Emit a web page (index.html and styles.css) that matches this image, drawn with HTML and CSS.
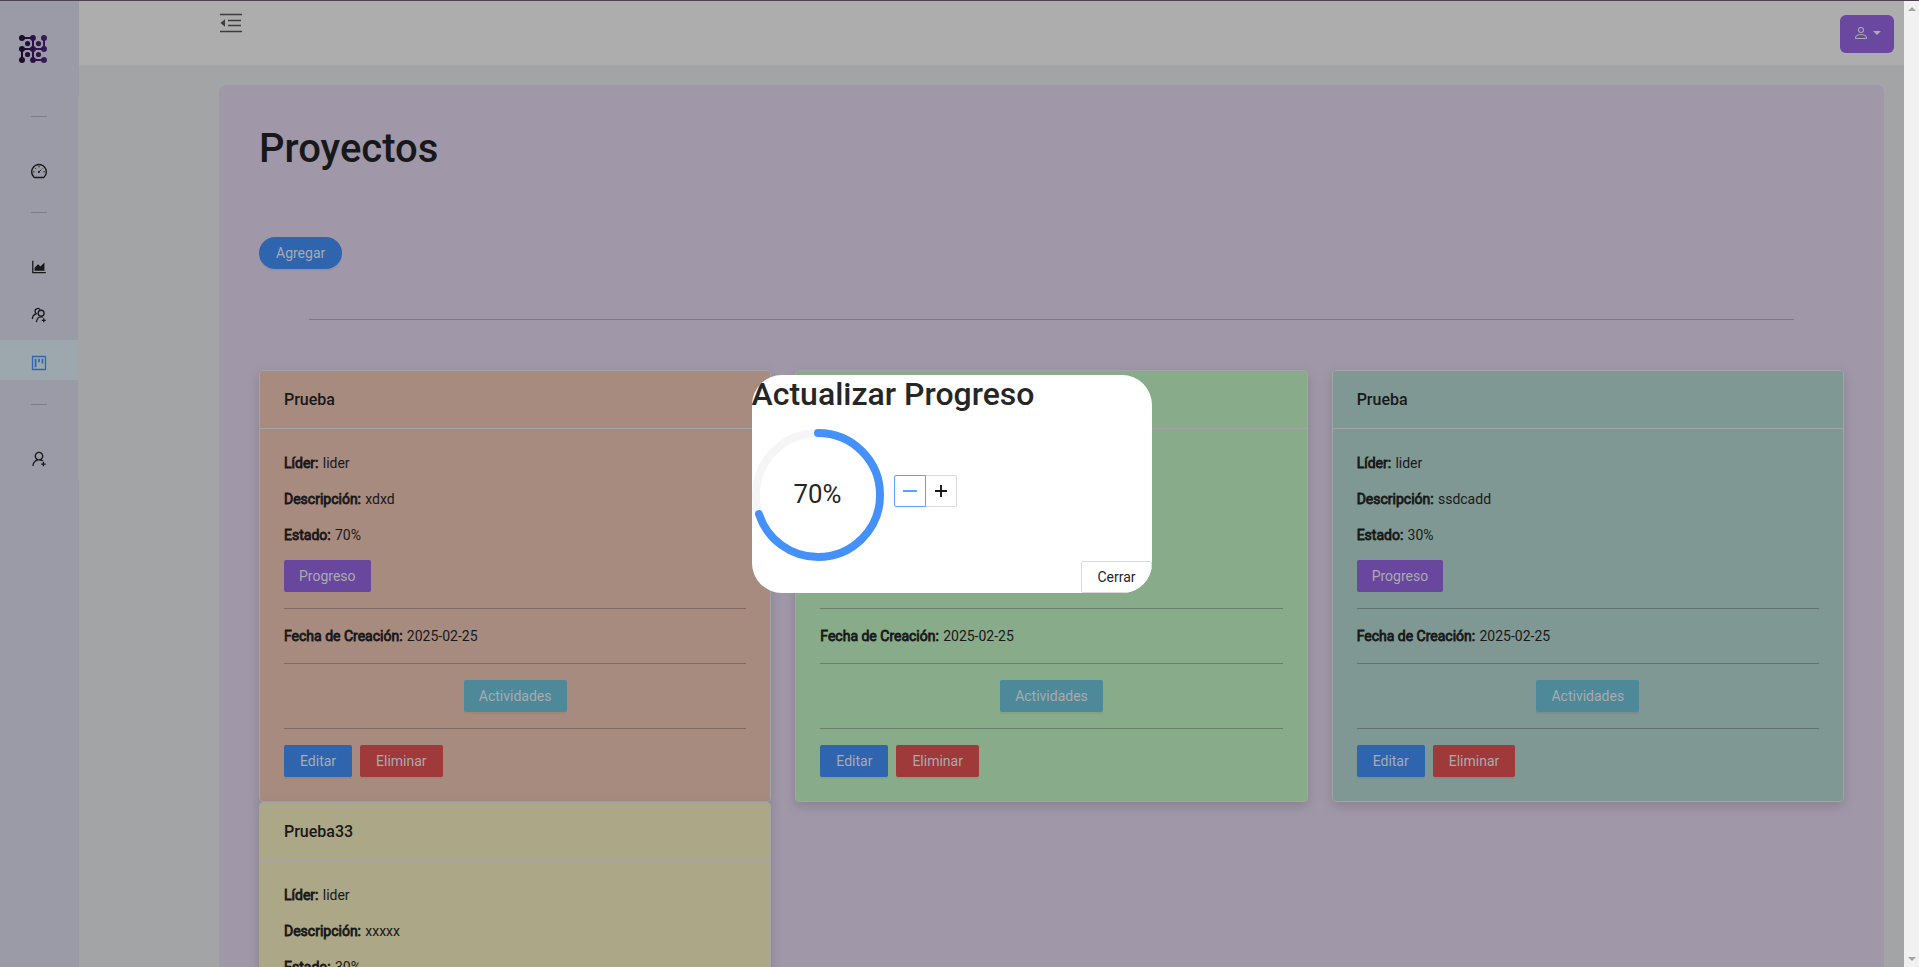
FILE: index.html
```
<!DOCTYPE html>
<html lang="es">
<head>
<meta charset="utf-8">
<title>Proyectos</title>
<link rel="stylesheet" href="styles.css">
</head>
<body>
<div class="app">
  <aside class="sidebar">
    <svg class="logo" viewBox="0 0 28 28">
      <defs><linearGradient id="lg" gradientUnits="userSpaceOnUse" x1="0" y1="0" x2="28" y2="0"><stop offset="0" stop-color="#180a26"/><stop offset="1" stop-color="#3b1b5e"/></linearGradient></defs>
      <g stroke="url(#lg)" stroke-width="2" fill="none"><path d="M3 3.010L14 3V14M25 3V14M3 14L25 14.010M3 14V25M14 14V25L25 25.010"/></g>
      <g fill="url(#lg)"><circle cx="3" cy="3" r="3"/><circle cx="14" cy="3" r="2.900"/><circle cx="25" cy="3" r="3"/><circle cx="3" cy="14" r="3"/><circle cx="14" cy="14" r="3"/><circle cx="25" cy="14" r="3"/><circle cx="3" cy="25" r="3"/><circle cx="14" cy="25" r="2.900"/><circle cx="25" cy="25" r="3"/><circle cx="8.600" cy="8.600" r="2.600"/><circle cx="19.500" cy="8.600" r="2.600"/><circle cx="8.600" cy="19.500" r="2.600"/><circle cx="19.500" cy="19.500" r="2.600"/></g>
    </svg>
    <nav class="menu">
      <hr class="menu-divider">
      <a class="menu-item"><svg viewBox="64 64 896 896"><path d="M924.8 385.6a446.7 446.7 0 00-96-142.4 446.7 446.7 0 00-142.4-96C631.1 123.8 572.5 112 512 112s-119.1 11.8-174.4 35.2a446.7 446.7 0 00-142.4 96 446.7 446.7 0 00-96 142.4C75.8 440.9 64 499.5 64 560c0 132.7 58.3 257.7 159.9 343.1l1.7 1.4c5.8 4.8 13.1 7.5 20.6 7.5h531.7c7.5 0 14.8-2.7 20.6-7.5l1.7-1.4C901.7 817.7 960 692.7 960 560c0-60.5-11.9-119.1-35.2-174.4zM761.4 836H262.6A371.12 371.12 0 01140 560c0-99.4 38.7-192.8 109-263 70.3-70.3 163.7-109 263-109 99.4 0 192.8 38.7 263 109 70.3 70.3 109 163.7 109 263 0 105.6-44.5 205.5-122.6 276z"/><path d="M512 232v80M182 560h80M762 560h80M288 336l50 50" stroke="currentColor" stroke-width="56"/><path d="M490 585L640 430M715 375l28-28" stroke="currentColor" stroke-width="52"/><circle cx="508" cy="572" r="56"/></svg></a>
      <hr class="menu-divider">
      <a class="menu-item"><svg viewBox="64 64 896 896"><path d="M888 792H200V168c0-4.4-3.6-8-8-8h-56c-4.4 0-8 3.6-8 8v688c0 4.4 3.6 8 8 8h752c4.4 0 8-3.6 8-8v-56c0-4.4-3.6-8-8-8zm-616-64h536c4.4 0 8-3.6 8-8V284c0-7.2-8.7-10.7-13.7-5.7L592 488.6l-125.4-124a8.03 8.03 0 00-11.3 0l-189 189.6a7.87 7.87 0 00-2.3 5.6V720c0 4.4 3.6 8 8 8z"/></svg></a>
      <a class="menu-item"><svg viewBox="64 64 896 896"><g fill="none" stroke="currentColor" stroke-width="72"><circle cx="632" cy="410" r="165"/><path d="M370 912C375 745 480 612 632 612c40 0 76 8 105 26"/><path d="M575 215C535 145 465 130 400 150C310 178 275 265 300 350C312 390 335 415 370 440C235 480 150 575 136 735"/></g><path d="M880 773h-68v-76h-68v76h-76v68h76v76h68v-76h76v-68z"/></svg></a>
      <a class="menu-item menu-item-active"><svg viewBox="64 64 896 896"><path d="M280 752h80c4.400 0 8-3.600 8-8V280c0-4.400-3.600-8-8-8h-80c-4.400 0-8 3.600-8 8v464c0 4.400 3.600 8 8 8zm192-280h80c4.400 0 8-3.600 8-8V280c0-4.400-3.600-8-8-8h-80c-4.400 0-8 3.600-8 8v184c0 4.400 3.600 8 8 8zm192 72h80c4.400 0 8-3.600 8-8V280c0-4.400-3.600-8-8-8h-80c-4.400 0-8 3.600-8 8v256c0 4.400 3.600 8 8 8zm216-432H144c-17.700 0-32 14.300-32 32v736c0 17.700 14.300 32 32 32h736c17.700 0 32-14.300 32-32V144c0-17.700-14.300-32-32-32zm-40 728H184V184h656v656z"/></svg></a>
      <hr class="menu-divider">
      <a class="menu-item"><svg viewBox="64 64 896 896"><path d="M678.3 642.400c24.200-13 51.900-20.400 81.400-20.400h.1c3 0 4.400-3.600 2.200-5.600a371.670 371.670 0 00-103.700-65.800c-.4-.2-.8-.3-1.200-.5C719.2 505 759.600 431.700 759.600 349c0-137-110.800-248-247.500-248S264.700 212 264.700 349c0 82.700 40.400 156 102.600 201.100-.4.2-.8.3-1.200.5-44.700 18.900-84.800 46-119.300 80.600a373.420 373.420 0 00-80.400 119.500A373.600 373.600 0 00137 888.800a8 8 0 008 8.200h59.900c4.300 0 7.900-3.500 8-7.800 2-77.200 32.900-149.500 87.600-204.300C357 628.200 432.200 597 512.200 597c56.700 0 111.100 15.700 158 45.100a8.100 8.100 0 008.100.3zM512.200 521c-45.800 0-88.900-17.900-121.400-50.400A171.200 171.200 0 01340.500 349c0-45.900 17.900-89.100 50.300-121.600S466.300 177 512.200 177s88.900 17.900 121.400 50.400A171.200 171.200 0 01683.900 349c0 45.900-17.900 89.100-50.300 121.600C601.100 503.100 558 521 512.200 521zM880 759h-84v-84c0-4.400-3.600-8-8-8h-56c-4.400 0-8 3.600-8 8v84h-84c-4.400 0-8 3.600-8 8v56c0 4.400 3.600 8 8 8h84v84c0 4.400 3.600 8 8 8h56c4.400 0 8-3.600 8-8v-84h84c4.400 0 8-3.600 8-8v-56c0-4.400-3.600-8-8-8z"/></svg></a>
    </nav>
  </aside>
  <div class="main">
    <header class="topbar">
      <svg class="toggle" viewBox="0 0 22 20"><path d="M0 1.500h22M8 7.500h13M8 12.500h13M0 18.500h22" stroke="currentColor" stroke-width="1.700"/><path d="M.5 10L5 6.200v7.600z"/></svg>
      <button class="user-button"><svg class="person" viewBox="0 0 16 16"><path d="M8 8a3 3 0 1 0 0-6 3 3 0 0 0 0 6m2-3a2 2 0 1 1-4 0 2 2 0 0 1 4 0m4 8c0 1-1 1-1 1H3s-1 0-1-1 1-4 6-4 6 3 6 4m-1-.004c-.001-.246-.154-.986-.832-1.664C11.516 10.680 10.289 10 8 10s-3.516.68-4.168 1.332c-.678.678-.83 1.418-.832 1.664z"/></svg><span class="caret"></span></button>
    </header>
    <main class="panel">
      <h1>Proyectos</h1>
      <button class="btn btn-round btn-primary">Agregar</button>
      <hr class="panel-divider">
      <div class="cards">
        <article class="card card-orange">
          <h3>Prueba</h3>
          <div class="card-body">
            <p><b>Líder:</b> lider</p><p><b>Descripción:</b> xdxd</p><p><b>Estado:</b> 70%</p>
            <button class="btn btn-purple">Progreso</button>
            <hr><p class="date"><b>Fecha de Creación:</b> 2025-02-25</p><hr>
            <div class="center"><button class="btn btn-info">Actividades</button></div>
            <hr>
            <div class="actions"><button class="btn btn-primary">Editar</button><button class="btn btn-danger">Eliminar</button></div>
          </div>
        </article>
        <article class="card card-green">
          <h3>Prueba</h3>
          <div class="card-body">
            <p><b>Líder:</b> lider</p><p><b>Descripción:</b> xdxd</p><p><b>Estado:</b> 70%</p>
            <button class="btn btn-purple">Progreso</button>
            <hr><p class="date"><b>Fecha de Creación:</b> 2025-02-25</p><hr>
            <div class="center"><button class="btn btn-info">Actividades</button></div>
            <hr>
            <div class="actions"><button class="btn btn-primary">Editar</button><button class="btn btn-danger">Eliminar</button></div>
          </div>
        </article>
        <article class="card card-teal">
          <h3>Prueba</h3>
          <div class="card-body">
            <p><b>Líder:</b> lider</p><p><b>Descripción:</b> ssdcadd</p><p><b>Estado:</b> 30%</p>
            <button class="btn btn-purple">Progreso</button>
            <hr><p class="date"><b>Fecha de Creación:</b> 2025-02-25</p><hr>
            <div class="center"><button class="btn btn-info">Actividades</button></div>
            <hr>
            <div class="actions"><button class="btn btn-primary">Editar</button><button class="btn btn-danger">Eliminar</button></div>
          </div>
        </article>
        <article class="card card-yellow">
          <h3>Prueba33</h3>
          <div class="card-body">
            <p><b>Líder:</b> lider</p><p><b>Descripción:</b> xxxxx</p><p><b>Estado:</b> 30%</p>
          </div>
        </article>
      </div>
    </main>
  </div>
  <div class="scrollbar"><i class="arrow-up"></i><i class="arrow-down"></i></div>
</div>
<section class="modal">
  <h2>Actualizar Progreso</h2>
  <div class="progress-row">
    <div class="ring">
      <svg viewBox="0 0 100 100"><circle cx="50" cy="50" r="47" stroke="#f5f5f5"/><circle cx="50" cy="50" r="47" stroke="#4591fb" stroke-linecap="round" pathLength="100" stroke-dasharray="70 100" transform="rotate(-90 50 50)"/></svg>
      <span class="ring-text">70%</span>
    </div>
    <div class="stepper">
      <button class="step step-active"><svg viewBox="0 0 14 14"><path d="M0 7h14" stroke="currentColor" stroke-width="1.800"/></svg></button>
      <button class="step"><svg viewBox="0 0 14 14"><path d="M1 7h12M7 1v12" stroke="currentColor" stroke-width="1.900"/></svg></button>
    </div>
  </div>
  <button class="close">Cerrar</button>
</section>
</body>
</html>
```

FILE: styles.css
```
* { box-sizing: border-box; }
html, body { margin: 0; height: 100%; overflow: hidden; }
body { font: 14px/22px Roboto, "Liberation Sans", sans-serif; color: #18181a; background: #a2a4a5; }
h1, h2, h3, p { margin: 0; font-weight: 500; }
button { font: inherit; margin: 0; padding: 0; border: 0; display: flex; align-items: center; justify-content: center; }
svg { display: block; fill: currentColor; }
hr { border: 0; margin: 0; height: 1px; }

.app { display: flex; height: 967px; border-top: 1px solid #4b4450; }
.sidebar { width: 79px; flex: none; background: linear-gradient(#a2a4a5, #a2a4a5) 78px 95px / 1px 384px no-repeat #9b9ba8; }
.logo { width: 28px; height: 28px; margin: 33.5px 0 0 19px; }
.menu { height: 384px; width: 78px; margin-top: 33.5px; display: flex; flex-direction: column; }
.menu-divider { width: 16px; background: #7e7c88; margin: 20px 31px 27px; flex: none; }
.menu-item { height: 40px; margin: 4px 0; padding-top: 6px; display: flex; align-items: center; justify-content: center; flex: none; }
.menu-item svg { width: 16px; height: 16px; }
.menu-item-active { background: #9ca8ae; color: #2f66ae; }

.main { flex: 1; min-width: 0; overflow: hidden; }
.topbar { height: 64px; background: #adadad; display: flex; justify-content: space-between; align-items: flex-start; padding: 12px 10px 0 141px; }
.toggle { width: 22px; height: 20px; color: #3c3c3c; }
.user-button { width: 54px; height: 38px; margin-top: 2px; border-radius: 6px; background: #6a489f; color: #adadad; }
.person { width: 16px; height: 16px; margin: -2px 4px 0 0; }
.caret { border: 4px solid transparent; border-top-color: currentColor; border-bottom: 0; margin-top: -2px; }
.panel { margin: 20px 20px 0 140px; height: 1400px; padding: 40px; background: #a097a8; border-radius: 8px; }
.panel h1 { font-size: 40px; line-height: 48px; }
.panel-divider { background: #7f7887; margin: 50px; }

.btn { height: 32px; padding: 0 15px; border-radius: 2px; color: #a9abae; box-shadow: 0 2px 0 rgba(0, 0, 0, .045); }
.btn-round { margin-top: 64px; padding: 0 17px; border-radius: 16px; }
.btn-primary { background: #2f65ae; }
.btn-purple { background: #6a479e; box-shadow: none; }
.btn-info { background: #4d8999; }
.btn-danger { background: #9f393a; }

.cards { display: grid; grid-template-columns: repeat(3, 1fr); column-gap: 24px; }
.card { height: 432px; border: 1px solid #a2a4a5; border-radius: 4px; box-shadow: 0 4px 12px rgba(0, 0, 0, .15); }
.card h3 { height: 58px; padding: 0 24px; font-size: 16px; line-height: 58px; border-bottom: 1px solid #a2a4a5; }
.card-body { padding: 23px 24px 24px; }
.card-body p { font-weight: 400; margin-bottom: 14px; }
.card-body b { font-weight: 400; -webkit-text-stroke: .8px currentColor; margin-right: .8px; }
.card-body hr { margin: 16px 0; background: rgba(0, 0, 0, .24); }
.card-body .date { margin-bottom: 16px; }
.center { display: flex; justify-content: center; }
.actions { display: flex; gap: 8px; }
.actions .btn { padding: 0 16px; }
.card-orange { background: #a88b7f; }
.card-green { background: #88ab8a; }
.card-teal { background: #7f9893; }
.card-yellow { background: #aca786; }

.scrollbar { width: 15px; flex: none; background: #f1f1f1; display: flex; flex-direction: column; justify-content: space-between; align-items: center; padding: 6px 0; }
.arrow-up, .arrow-down { border: 4px solid transparent; }
.arrow-up { border-top: 0; border-bottom-color: #a3a3a3; }
.arrow-down { border-bottom: 0; border-top-color: #a3a3a3; }

.modal { position: absolute; left: 752px; top: 375px; width: 400px; height: 218px; border-radius: 30px; background: #fff; color: #262626; overflow: hidden; }
.modal h2 { margin-left: -.5px; font-size: 32px; line-height: 38px; }
.progress-row { display: flex; align-items: flex-start; gap: 10px; margin-top: 16px; height: 132px; }
.ring { width: 132px; height: 132px; display: grid; place-items: center; }
.ring > * { grid-area: 1 / 1; }
.ring svg { width: 132px; height: 132px; }
.ring circle { fill: none; stroke-width: 6; }
.ring-text { font-size: 25.800px; line-height: 26px; margin: 0 1px 2px 0; }
.stepper { display: flex; margin-top: 46px; }
.step { width: 32px; height: 32px; background: #fff; border: 1px solid #d9d9d9; border-radius: 0 2px 2px 0; color: #171717; }
.step + .step { margin-left: -1px; border-left: 0; }
.step-active { border-color: #57a4fa; color: #57a4fa; border-radius: 2px 0 0 2px; z-index: 1; }
.step svg { width: 14px; height: 14px; }
.close { width: 71px; height: 32px; margin-left: auto; background: #fff; border: 1px solid #d9d9d9; border-radius: 2px; color: #262626; }
```
